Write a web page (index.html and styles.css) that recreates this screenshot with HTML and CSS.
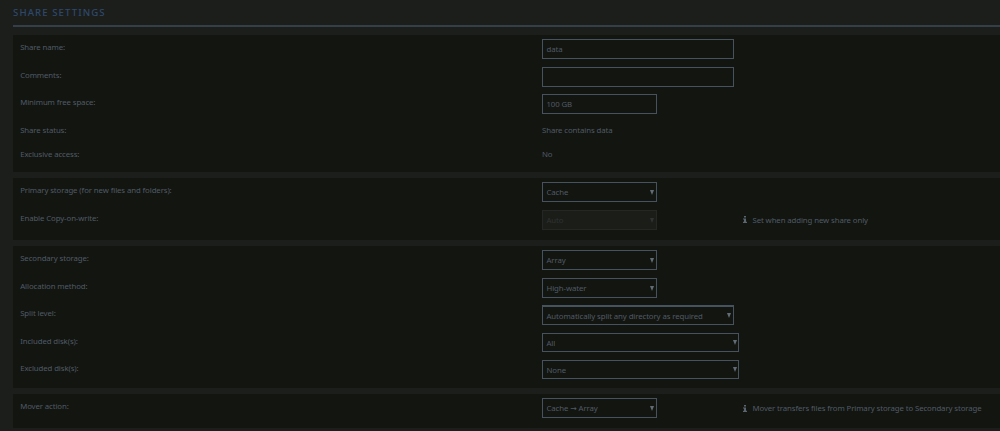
FILE: index.html
```
<!DOCTYPE html>
<html lang="en">

<head>
    <meta charset="UTF-8">
    <meta name="viewport" content="width=device-width, initial-scale=1.0">
    <title>Share Settings</title>
    <link rel="stylesheet" href="styles.css">
</head>

<body>
    <h1 class="title"><span>Share Settings</span></h1>

    <form class="settings">
        <div class="panel general">
            <div class="row">
                <label for="name">Share name:</label>
                <div class="field"><input type="text" id="name" class="wide" value="data"></div>
            </div>
            <div class="row">
                <label for="comments">Comments:</label>
                <div class="field"><input type="text" id="comments" class="wide"></div>
            </div>
            <div class="row">
                <label for="floor">Minimum free space:</label>
                <div class="field"><input type="text" id="floor" value="100 GB"></div>
            </div>
            <div class="row short">
                <label>Share status:</label>
                <div class="value">Share contains data</div>
            </div>
            <div class="row short">
                <label>Exclusive access:</label>
                <div class="value">No</div>
            </div>
        </div>

        <div class="panel primary">
            <div class="row">
                <label for="primary">Primary storage (for new files and folders):</label>
                <div class="field"><span class="select"><select id="primary"><option>Cache</option></select></span></div>
            </div>
            <div class="row">
                <label for="cow">Enable Copy-on-write:</label>
                <div class="field"><span class="select disabled"><select id="cow" disabled><option>Auto</option></select></span></div>
                <div class="note">
                    <svg class="info" viewBox="0 0 4 7"><path d="M1 0h2v1.5H1zM0 2.4h3v3.4h1V7H0V5.8h1V3.5H0z"/></svg>
                    <span>Set when adding new share only</span>
                </div>
            </div>
        </div>

        <div class="panel secondary">
            <div class="row">
                <label for="secondary">Secondary storage:</label>
                <div class="field"><span class="select"><select id="secondary"><option>Array</option></select></span></div>
            </div>
            <div class="row">
                <label for="allocator">Allocation method:</label>
                <div class="field"><span class="select"><select id="allocator"><option>High-water</option></select></span></div>
            </div>
            <div class="row">
                <label for="split">Split level:</label>
                <div class="field"><span class="select wide split"><select id="split"><option>Automatically split any directory as required</option></select></span></div>
            </div>
            <div class="row disks">
                <label for="include">Included disk(s):</label>
                <div class="field"><span class="select multi"><select id="include"><option>All</option></select></span></div>
            </div>
            <div class="row disks">
                <label for="exclude">Excluded disk(s):</label>
                <div class="field"><span class="select multi"><select id="exclude"><option>None</option></select></span></div>
            </div>
        </div>

        <div class="panel mover">
            <div class="row">
                <label for="mover">Mover action:</label>
                <div class="field"><span class="select"><select id="mover"><option>Cache → Array</option></select></span></div>
                <div class="note">
                    <svg class="info" viewBox="0 0 4 7"><path d="M1 0h2v1.5H1zM0 2.4h3v3.4h1V7H0V5.8h1V3.5H0z"/></svg>
                    <span>Mover transfers files from Primary storage to Secondary storage</span>
                </div>
            </div>
        </div>
    </form>
</body>

</html>
```

FILE: styles.css
```
* {
    box-sizing: border-box;
}

body {
    margin: 0;
    padding-left: 13px;
    height: 431px;
    overflow: hidden;
    background-color: #1c1e1c;
    color: #505b67;
    font-family: "Noto Sans", "DejaVu Sans", sans-serif;
    font-size: 7.8px;
    letter-spacing: -0.1px;
}

.title {
    margin: 0 0 8px;
    height: 27px;
    border-bottom: 2px solid #343f47;
    color: #2e486c;
    font-size: 9.6px;
    font-weight: 500;
    line-height: 26px;
    letter-spacing: 1.1px;
    text-transform: uppercase;
}

.settings {
    display: flex;
    flex-direction: column;
    gap: 6px;
}

.panel {
    padding: 4px 0 0 7.2px;
    background-color: #131510;
}

.general {
    height: 137px;
}

.primary {
    height: 62px;
}

.secondary {
    height: 142px;
}

.mover {
    height: 34px;
}

.row {
    display: grid;
    grid-template-columns: 521.8px 201px 1fr;
    height: 27.6px;
}

.row.short {
    height: 24px;
}

.row.disks {
    height: 27px;
}

label,
.value {
    line-height: 17px;
}

input,
select {
    display: block;
    width: 115px;
    height: 20px;
    margin: 0;
    padding: 0 3.5px;
    border: 1px solid #46525e;
    border-radius: 0;
    outline: 0;
    background-color: transparent;
    color: inherit;
    font: inherit;
    letter-spacing: inherit;
    appearance: none;
}

input.wide,
.wide select {
    width: 192px;
}

.select {
    display: block;
    position: relative;
    width: 115px;
}

.select.wide {
    width: 192px;
}

.select.multi,
.multi select {
    width: 197px;
}

.multi select {
    height: 19px;
    padding-top: 1px;
}

.split select {
    border-top-width: 2px;
}

/* dropdown arrow */
.select::after {
    content: "";
    position: absolute;
    top: 8px;
    right: 3px;
    border-top: 5px solid #626c76;
    border-left: 2.5px solid transparent;
    border-right: 2.5px solid transparent;
}

.multi::after {
    top: 7px;
    right: 2px;
}

.disabled select {
    border-color: #252724;
    background-color: #1b1d19;
    color: #2f3331;
    opacity: 1;
}

.disabled::after {
    border-top-color: #303331;
}

.note {
    display: flex;
    align-items: center;
    gap: 5.5px;
    height: 20px;
}

.info {
    width: 4px;
    height: 7px;
    fill: #5b6570;
}
```
